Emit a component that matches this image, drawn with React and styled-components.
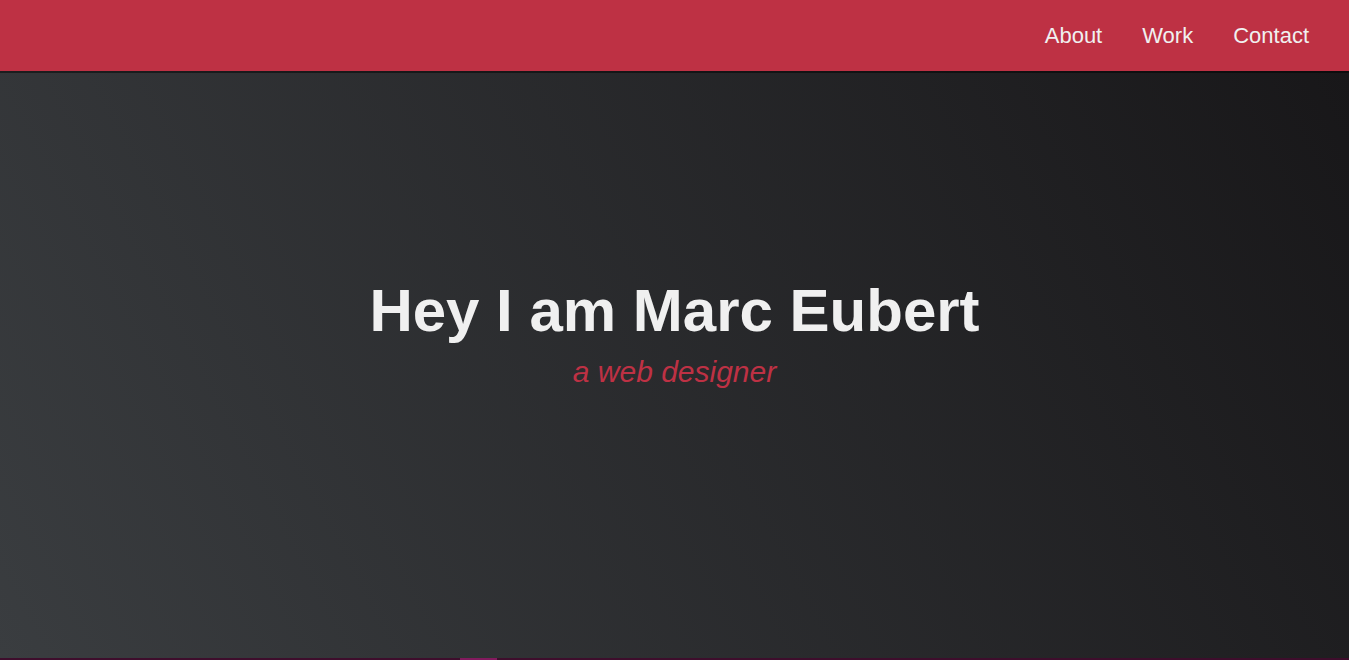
import React from 'react'
import styled, { createGlobalStyle } from 'styled-components'

const GlobalStyle = createGlobalStyle`
  html, body {
    margin: 0;
    padding: 0;
    background: #303841;
    font-family: "Liberation Sans", Arial, sans-serif;
    color: #f0f0f0;
  }
  * { box-sizing: border-box; }
`

const Page = styled.div`
  display: flex;
  flex-direction: column;
  height: 660px;
  overflow: hidden;
`

const Nav = styled.nav`
  display: flex;
  justify-content: flex-end;
  align-items: center;
  height: 71px;
  padding-right: 20px;
  background: #be3144;
`

const NavLink = styled.a`
  display: block;
  padding: 0 20px;
  font-size: 22px;
  color: #f0f0f0;
  text-decoration: none;
  margin-top: 1px;
`

const Hero = styled.section`
  display: flex;
  flex-direction: column;
  align-items: center;
  justify-content: center;
  height: 587px;
  padding-bottom: 64px;
  background: linear-gradient(62deg, #3a3d40 0%, #181719 100%);
  box-shadow: inset 0 2px 0 rgba(0, 0, 0, 0.45);
`

const Title = styled.h1`
  margin: 0;
  font-size: 60px;
  line-height: 72px;
  font-weight: 700;
  color: #f0f0f0;
`

const Subtitle = styled.p`
  margin: 7px 0 0;
  font-size: 30px;
  line-height: 36px;
  font-style: italic;
  font-weight: 400;
  color: #be3144;
`

const NextSection = styled.div`
  display: flex;
  height: 2px;
  background: #3e0d2c;
  padding-left: 460px;
`

const Marker = styled.span`
  width: 37px;
  background: #821a5e;
`

export default function App() {
  return (
    <>
      <GlobalStyle />
      <Page>
        <Nav>
          <NavLink href="#about">About</NavLink>
          <NavLink href="#work">Work</NavLink>
          <NavLink href="#contact">Contact</NavLink>
        </Nav>
        <Hero>
          <Title>Hey I am Marc Eubert</Title>
          <Subtitle>a web designer</Subtitle>
        </Hero>
        <NextSection>
          <Marker />
        </NextSection>
      </Page>
    </>
  )
}
